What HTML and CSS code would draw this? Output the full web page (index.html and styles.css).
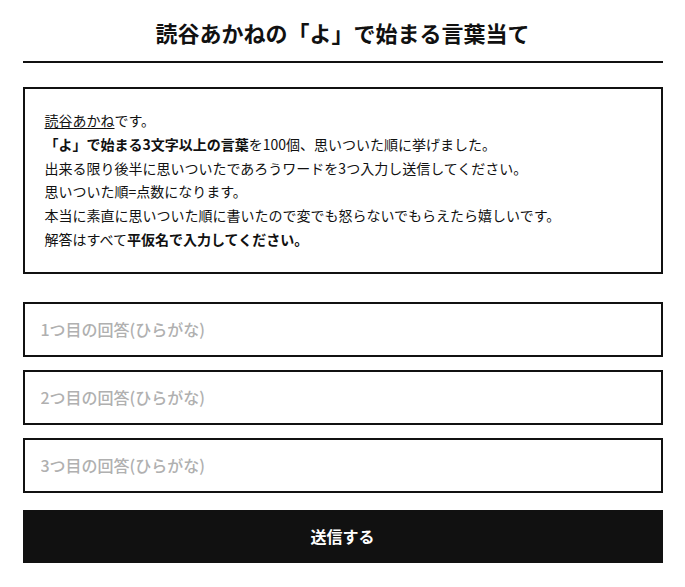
FILE: index.html
```html
<!DOCTYPE html>
<html lang="ja">
<head>
<meta charset="utf-8">
<title>読谷あかねの「よ」で始まる言葉当て</title>
<link rel="stylesheet" href="styles.css">
</head>
<body>
<div class="page">
  <header class="header">
    <h1 class="title">読谷あかねの「よ」で始まる言葉当て</h1>
  </header>
  <section class="intro">
    <p class="line"><span class="name">読谷あかね</span>です。</p>
    <p class="line"><strong>「よ」で始まる3文字以上の言葉</strong>を100個、思いついた順に挙げました。</p>
    <p class="line">出来る限り後半に思いついたであろうワードを3つ入力し送信してください。</p>
    <p class="line">思いついた順=点数になります。</p>
    <p class="line">本当に素直に思いついた順に書いたので変でも怒らないでもらえたら嬉しいです。</p>
    <p class="line">解答はすべて<strong>平仮名で入力してください。</strong></p>
  </section>
  <form class="form">
    <input class="answer" type="text" placeholder="1つ目の回答(ひらがな)">
    <input class="answer" type="text" placeholder="2つ目の回答(ひらがな)">
    <input class="answer" type="text" placeholder="3つ目の回答(ひらがな)">
    <button class="submit" type="button">送信する</button>
  </form>
</div>
</body>
</html>
```

FILE: styles.css
```css
* {
  box-sizing: border-box;
}

html, body {
  margin: 0;
  padding: 0;
  background: #ffffff;
}

body {
  font-family: "Noto Sans CJK JP", "Noto Sans", sans-serif;
  color: #111111;
}

.page {
  width: 640px;
  margin: 0 auto;
}

.header {
  padding-top: 16px;
  padding-bottom: 12px;
  border-bottom: 2px solid #111111;
}

.title {
  margin: 0;
  font-size: 22px;
  line-height: 33px;
  font-weight: 700;
  text-align: center;
}

.intro {
  margin-top: 24px;
  border: 2px solid #111111;
  padding: 20px 20px 20px;
  font-size: 14px;
  line-height: 23.8px;
  font-weight: 400;
}

.line {
  margin: 0;
}

.name {
  text-decoration: underline;
  text-underline-offset: 2px;
}

.intro strong {
  font-weight: 700;
}

.form {
  margin-top: 28px;
  display: flex;
  flex-direction: column;
  gap: 13px;
}

.answer {
  display: block;
  width: 100%;
  height: 55px;
  margin: 0;
  border: 2px solid #111111;
  border-radius: 0;
  padding: 0 16px;
  font-family: "Noto Sans CJK JP", "Noto Sans", sans-serif;
  font-size: 16px;
  font-weight: 500;
  color: #111111;
  background: #ffffff;
  outline: none;
}

.answer::placeholder {
  color: #b0b0b0;
}

.submit {
  display: block;
  width: 100%;
  height: 53px;
  margin: 4px 0 0;
  border: none;
  border-radius: 0;
  background: #111111;
  color: #ffffff;
  font-family: "Noto Sans CJK JP", "Noto Sans", sans-serif;
  font-size: 16px;
  font-weight: 700;
  cursor: pointer;
}
```
